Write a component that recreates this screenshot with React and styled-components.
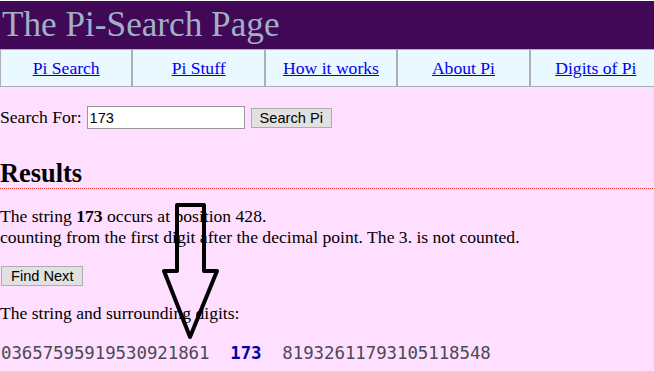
import React from 'react';
import styled, { createGlobalStyle } from 'styled-components';

const GlobalStyle = createGlobalStyle`
  html, body {
    margin: 0;
    padding: 0;
    background: #ffdfff;
    overflow: hidden;
  }
  body {
    font-family: "Liberation Serif", "Times New Roman", serif;
    font-size: 17.6px;
    color: #000;
  }
`;

const Page = styled.div`
  position: relative;
  min-height: 371px;
  overflow: hidden;
  border-top: 1px solid #fff;
`;

const Header = styled.header`
  height: 48px;
  background: #410858;
  padding-left: 2px;
`;

const Title = styled.h1`
  margin: 0;
  font-size: 35.2px;
  font-weight: normal;
  line-height: 48px;
  color: #a0b0c6;
`;

const Nav = styled.nav`
  display: flex;
  width: 662px;
  height: 38px;
`;

const NavCell = styled.div`
  flex: 1;
  display: flex;
  align-items: center;
  justify-content: center;
  background: #eaf8ff;
  border: 1px solid #b0b0b0;
`;

const NavLink = styled.a`
  color: #0000ee;
  text-decoration: underline;
  font-size: 17.6px;
`;

const SearchForm = styled.form`
  display: flex;
  align-items: center;
  height: 23px;
  margin: 19px 0 0;
`;

const Label = styled.label`
  margin-right: 5px;
`;

const TextInput = styled.input`
  width: 158px;
  height: 23px;
  box-sizing: border-box;
  border: 1px solid #999;
  background: #fff;
  padding: 0 2px;
  font-family: "Liberation Sans", Arial, sans-serif;
  font-size: 14.6px;
  color: #000;
  outline: none;
`;

const Button = styled.button`
  height: 20px;
  margin-left: ${props => props.offset || 0}px;
  padding: 0 ${props => props.pad || 9}px;
  border: 1px solid #adadad;
  background: #e1e1e1;
  font-family: "Liberation Sans", Arial, sans-serif;
  font-size: 14.6px;
  line-height: 18px;
  color: #000;
  border-radius: 0;
`;

const Heading = styled.h2`
  margin: 29px 0 0;
  padding-bottom: 1px;
  font-size: 26.4px;
  font-weight: bold;
  line-height: 30px;
  background-image: repeating-linear-gradient(to right, #f03030 0 1px, transparent 1px 2px);
  background-size: 100% 1px;
  background-repeat: no-repeat;
  background-position: left bottom;
`;

const Para = styled.p`
  margin: ${props => props.top}px 0 0;
  line-height: 20.5px;
`;

const ButtonRow = styled.div`
  margin-top: 19px;
  padding-left: 1px;
  display: flex;
`;

const Digits = styled.pre`
  margin: 19px 0 0;
  font-family: "DejaVu Sans Mono", "Liberation Mono", monospace;
  font-size: 17.4px;
  letter-spacing: -0.05px;
  line-height: 21px;
  color: #4a4a54;
  padding-left: 1px;
`;

const Match = styled.b`
  color: #0000a8;
`;

const Arrow = styled.svg`
  position: absolute;
  left: 0;
  top: 0;
  pointer-events: none;
`;

const links = ['Pi Search', 'Pi Stuff', 'How it works', 'About Pi', 'Digits of Pi'];

export default function App() {
  return (
    <Page>
      <GlobalStyle />
      <Header>
        <Title>The Pi-Search Page</Title>
      </Header>
      <Nav>
        {links.map(l => (
          <NavCell key={l}>
            <NavLink href="#">{l}</NavLink>
          </NavCell>
        ))}
      </Nav>
      <SearchForm onSubmit={e => e.preventDefault()}>
        <Label>Search For:</Label>
        <TextInput defaultValue="173" />
        <Button offset={6} pad={8} type="button">Search Pi</Button>
      </SearchForm>
      <Heading>Results</Heading>
      <Para top={17}>
        The string <b>173</b> occurs at position 428.<br />
        counting from the first digit after the decimal point. The 3. is not counted.
      </Para>
      <ButtonRow>
        <Button type="button">Find Next</Button>
      </ButtonRow>
      <Para top={17}>The string and surrounding digits:</Para>
      <Digits>03657595919530921861  <Match>173</Match>  81932611793105118548</Digits>
      <Arrow width="654" height="371" viewBox="0 0 654 371">
        <path
          d="M177 204 L204 204 L204 270 L217 270 L190 336 L164 270 L177 270 Z"
          fill="none"
          stroke="#000"
          strokeWidth="4"
          strokeLinejoin="round"
        />
      </Arrow>
    </Page>
  );
}
